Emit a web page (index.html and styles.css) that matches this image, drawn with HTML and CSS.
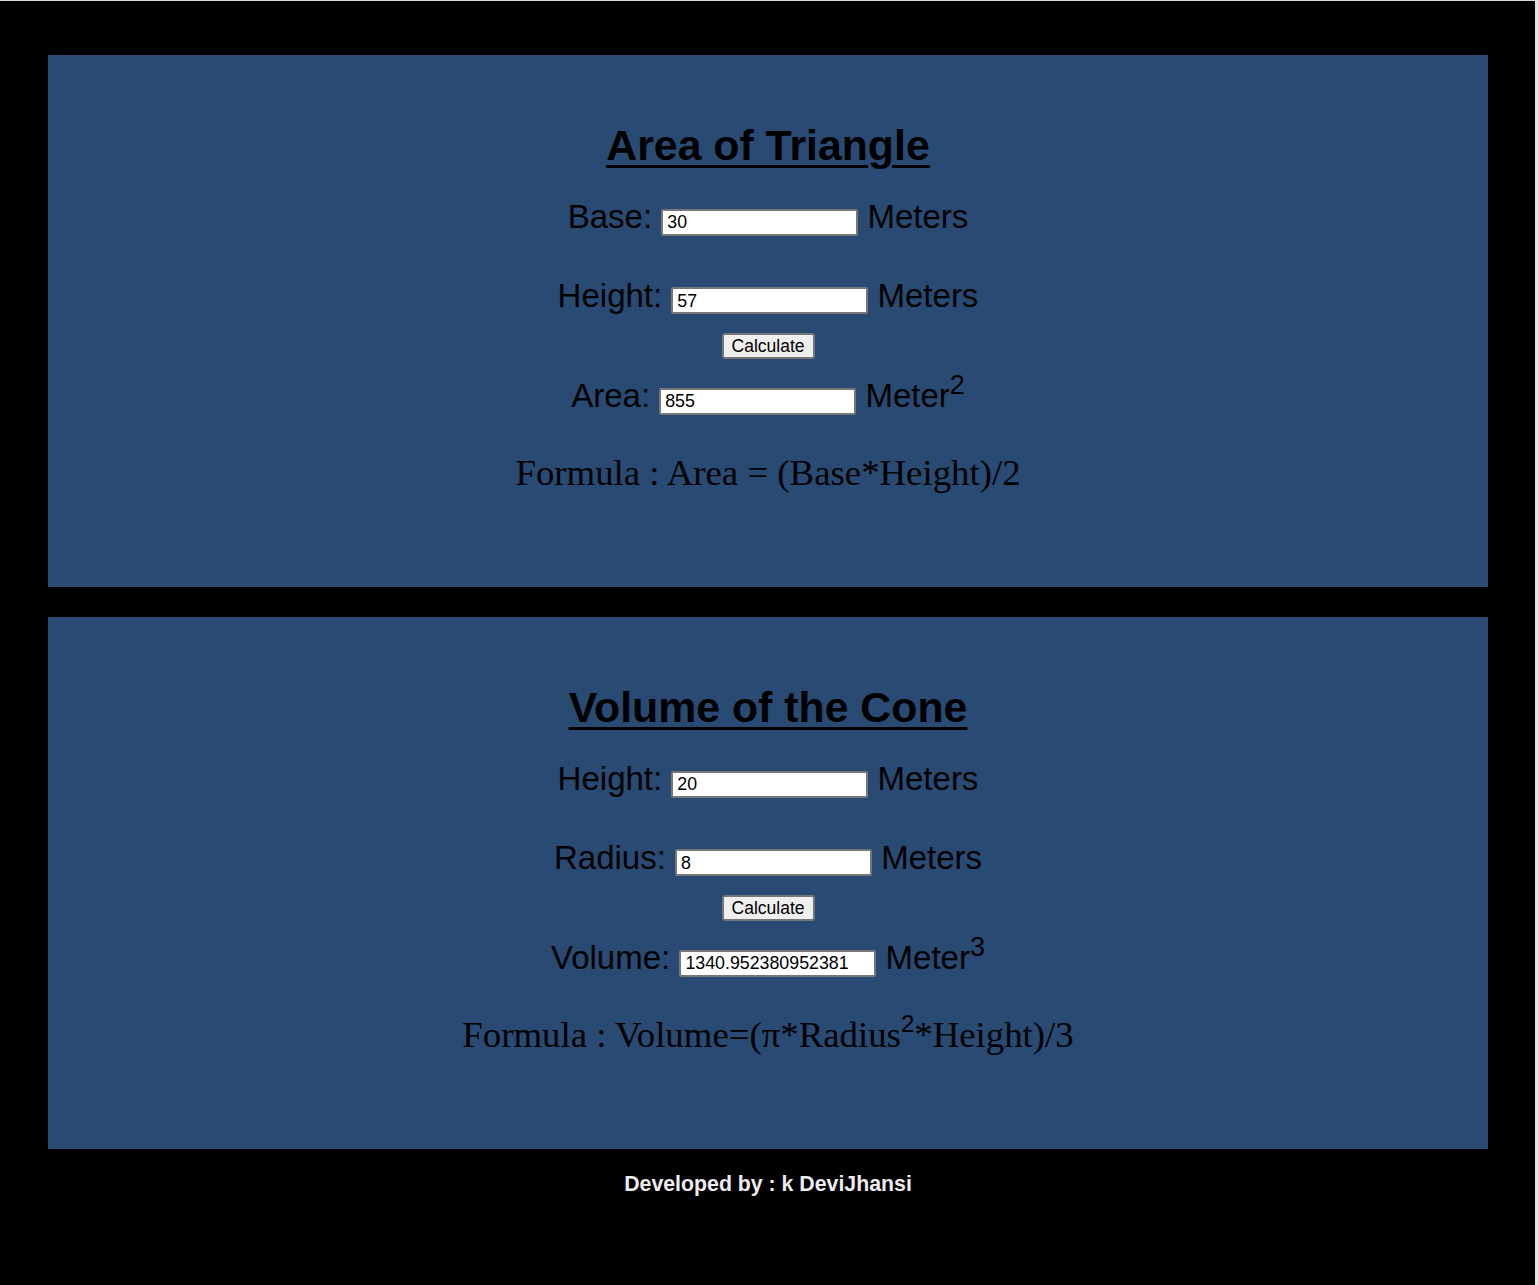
FILE: index.html
```html
<!DOCTYPE html>
<html lang="en">
<head>
<meta charset="utf-8">
<title>Area and Volume Calculator</title>
<link rel="stylesheet" href="styles.css">
</head>
<body>
<main class="page">
  <section class="panel">
    <h1 class="title">Area of Triangle</h1>
    <div class="row row-first">Base: <input class="field" type="text" value="30"> Meters</div>
    <div class="row row-next">Height: <input class="field" type="text" value="57"> Meters</div>
    <button class="calc" type="button">Calculate</button>
    <div class="row row-result">Area: <input class="field" type="text" value="855"> Meter<sup class="pow">2</sup></div>
    <p class="formula">Formula : Area = (Base*Height)/2</p>
  </section>
  <section class="panel">
    <h1 class="title">Volume of the Cone</h1>
    <div class="row row-first">Height: <input class="field" type="text" value="20"> Meters</div>
    <div class="row row-next">Radius: <input class="field" type="text" value="8"> Meters</div>
    <button class="calc" type="button">Calculate</button>
    <div class="row row-result">Volume: <input class="field" type="text" value="1340.952380952381"> Meter<sup class="pow">3</sup></div>
    <p class="formula">Formula : Volume=(π*Radius<sup class="fpow">2</sup>*Height)/3</p>
  </section>
  <footer class="credit">Developed by : k DeviJhansi</footer>
</main>
</body>
</html>
```
FILE: styles.css
```css
html, body {
  margin: 0;
  padding: 0;
}
body {
  background: #000;
  min-height: 1285px;
  box-sizing: border-box;
  border-top: 1px solid #d8d8d8;
  border-right: 3px solid #e4e4e4;
  font-family: "Liberation Sans", Arial, sans-serif;
}
.page {
  display: flex;
  flex-direction: column;
  gap: 30px;
  padding: 54px 47px 0 48px;
}
.panel {
  background: #284a73;
  height: 532px;
  box-sizing: border-box;
  padding-top: 66px;
  display: flex;
  flex-direction: column;
  align-items: center;
  color: #000;
}
.title {
  margin: 0;
  font-size: 42.8px;
  line-height: 48px;
  font-weight: bold;
  text-decoration: underline;
  text-underline-offset: 5px;
  text-decoration-thickness: 3px;
}
.row {
  font-size: 33px;
  line-height: 36px;
  white-space: nowrap;
}
.row-first { margin-top: 30px; }
.row-next { margin-top: 42px; }
.row-result { margin-top: 19px; }
.field {
  width: 197px;
  height: 27px;
  box-sizing: border-box;
  font-family: "Liberation Sans", Arial, sans-serif;
  font-size: 17.8px;
  padding: 1px 4px 0;
  border: 2px solid #777;
  border-radius: 2px;
  background: #fff;
  color: #000;
  vertical-align: baseline;
}
.pow {
  font-size: 27px;
  line-height: 0;
  vertical-align: 13px;
}
.calc {
  margin-top: 19px;
  width: 93px;
  height: 26px;
  font-family: "Liberation Sans", Arial, sans-serif;
  font-size: 17.5px;
  color: #000;
  background: #efefef;
  border: 2px solid #767676;
  border-radius: 3px;
  padding: 0;
}
.formula {
  margin: 38px 0 0;
  font-family: "Liberation Serif", "Times New Roman", serif;
  font-size: 36.8px;
  line-height: 40px;
  color: #000;
}
.fpow {
  font-family: "Liberation Sans", Arial, sans-serif;
  font-size: 24px;
  line-height: 0;
  vertical-align: 15px;
}
.credit {
  margin-top: -7px;
  text-align: center;
  color: #eeecee;
  font-weight: bold;
  font-size: 21.3px;
  line-height: 24px;
}
```
